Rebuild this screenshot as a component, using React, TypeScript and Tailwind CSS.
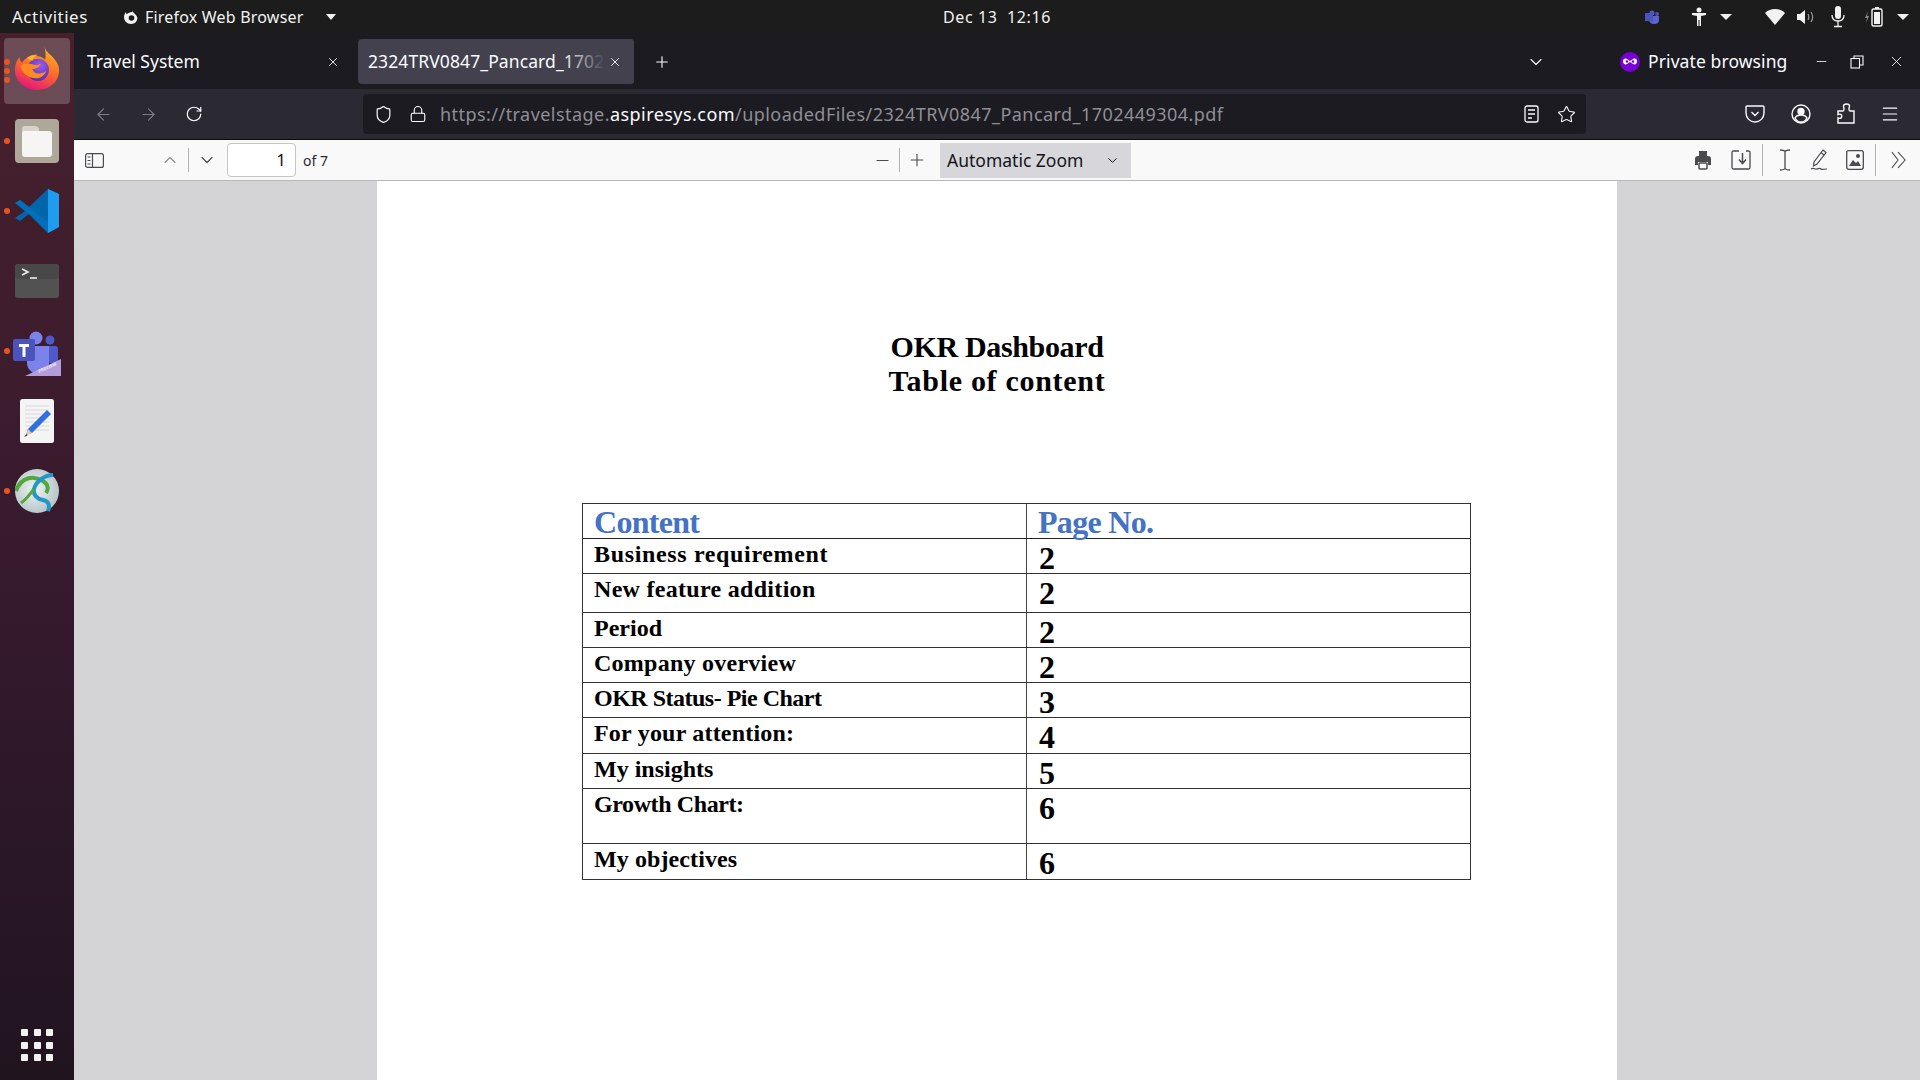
import { ArrowLeft, ArrowRight, ChevronDown, ChevronUp, Lock, Menu, Minus, Plus, RotateCw, Shield, Star, X } from 'lucide-react';

const ui = { fontFamily: '"Noto Sans", sans-serif' };
const doc = { fontFamily: '"Liberation Serif", serif' };

const rows = [
    { label: 'Business requirement', page: '2', h: 'h-[35px]', track: 'tracking-[0.65px]' },
    { label: 'New feature addition', page: '2', h: 'h-[39px]', track: 'tracking-[0.3px]' },
    { label: 'Period', page: '2', h: 'h-[35px]', track: 'tracking-[0px]' },
    { label: 'Company overview', page: '2', h: 'h-[35px]', track: 'tracking-[0.25px]' },
    { label: 'OKR Status- Pie Chart', page: '3', h: 'h-[35px]', track: 'tracking-[-0.5px]' },
    { label: 'For your attention:', page: '4', h: 'h-[36px]', track: 'tracking-[0.2px]' },
    { label: 'My insights', page: '5', h: 'h-[35px]', track: 'tracking-[0px]' },
    { label: 'Growth Chart:', page: '6', h: 'h-[55px]', track: 'tracking-[-0.4px]' },
    { label: 'My objectives', page: '6', h: 'h-[35px]', track: 'tracking-[0.1px]' },
];

function FirefoxLogo() {
    return (
        <svg className="mt-[-6px]" width="46" height="48" viewBox="0 0 50 50">
            <defs>
                <linearGradient id="ffBody" x1="0.7" y1="0" x2="0.3" y2="1">
                    <stop offset="0" stopColor="#ffb627" />
                    <stop offset="0.5" stopColor="#ff6a2b" />
                    <stop offset="1" stopColor="#e3127c" />
                </linearGradient>
                <radialGradient id="ffGlobe" cx="0.6" cy="0.3" r="0.8">
                    <stop offset="0" stopColor="#9a5cf0" />
                    <stop offset="1" stopColor="#4a2a9c" />
                </radialGradient>
            </defs>
            <path d="M33 1c1 5 4 7 8 11 5 5 8 10 8 15 0 13-10 22-24 22C11 49 1 39 1 27 1 21 3 17 6 13c0 3 1 5 3 6 3-5 8-7 14-7 4 0 8 1 11 4 1-5 0-10-1-15z" fill="url(#ffBody)" />
            <circle cx="26" cy="27" r="12" fill="url(#ffGlobe)" />
            <path d="M7 23c4-4 9-3 13-2 3 1 6 1 9-1-1 4-5 6-9 6 1 3 3 5 7 5 3 0 6-1 8-3-2 6-7 9-13 8-8-1-14-7-15-13z" fill="#ff8a1f" />
            <path d="M14 14c4-3 8-4 12-3-3 1-5 3-6 6-3-1-5-2-6-3z" fill="#ffb627" />
        </svg>
    );
}

function FilesIcon() {
    return (
        <svg width="44" height="44" viewBox="0 0 44 44">
            <rect width="44" height="44" rx="4" fill="#aea89a" />
            <path d="M7 10c0-2 1-3 3-3h10c2 0 3 1 4 3v6H7z" fill="#d8d4cc" />
            <path d="M7 15c0-2 1-3 3-3h24c2 0 3 1 3 3v20c0 2-1 3-3 3H10c-2 0-3-1-3-3z" fill="#f6f5f4" />
        </svg>
    );
}

function VsCodeIcon() {
    return (
        <svg width="44" height="44" viewBox="0 0 44 44">
            <path d="M33 0l11 5v33l-11 6-19-19-9 7-5-3 10-7L0 14l5-3 9 7z" fill="#0065a9" />
            <path d="M33 0l11 5v33l-11 6z" fill="#1f9cf0" />
            <path d="M5 11L33 33v11L14 25 0 14z" fill="#007acc" opacity="0.55" />
        </svg>
    );
}

function TerminalIcon() {
    return (
        <svg width="44" height="34" viewBox="0 0 44 34">
            <rect width="44" height="34" rx="3" fill="#525252" />
            <rect width="44" height="15" rx="3" fill="#484848" />
            <path d="M7 5l6 3-6 3" fill="none" stroke="#eee" strokeWidth="1.6" />
            <path d="M15 14h7" stroke="#eee" strokeWidth="1.6" />
        </svg>
    );
}

function TeamsIcon() {
    return (
        <svg className="mt-[5px]" width="48" height="46" viewBox="0 0 48 46">
            <circle cx="23" cy="7" r="6.5" fill="#7b83eb" />
            <circle cx="37" cy="9" r="4.5" fill="#5059c9" />
            <path d="M31 15h11c2 0 3 1 3 3v14H31z" fill="#5059c9" />
            <path d="M14 15h22v18c0 6-4 10-10 10-7 0-12-5-12-11z" fill="#7b83eb" />
            <rect y="8" width="22" height="22" rx="2" fill="#4b53bc" />
            <path d="M6 13h10v3h-3.500v10h-3V16H6z" fill="#fff" />
            <path d="M12 45l36-17v17z" fill="#b39ddb" />
            <text x="26" y="42" fontSize="4.500" fontWeight="700" fill="#f1ecfa" transform="rotate(-24 26 42)" style={ui}>PREVIEW</text>
        </svg>
    );
}

function EditorIcon() {
    return (
        <svg width="34" height="44" viewBox="0 0 34 44">
            <rect width="34" height="44" rx="2.500" fill="#f4f4f4" />
            <path d="M5 7h24M5 11h24M5 15h24M5 19h24M5 23h24M5 27h24M5 31h24" stroke="#d8d8d8" />
            <path d="M27 11l4 4-19 19-6 2 2-6z" fill="#2f6fde" />
            <path d="M6 36l2-6 4 4z" fill="#e8c9a0" />
            <path d="M4 38l2.500-3 1 1.500z" fill="#333" />
        </svg>
    );
}

function VpnIcon() {
    return (
        <svg width="44" height="44" viewBox="0 0 44 44">
            <defs>
                <radialGradient id="vpnGlobe" cx="0.45" cy="0.45" r="0.6">
                    <stop offset="0" stopColor="#eef3f4" />
                    <stop offset="1" stopColor="#b4c2c6" />
                </radialGradient>
            </defs>
            <circle cx="22" cy="22" r="22" fill="url(#vpnGlobe)" />
            <path d="M1 22C6 8 18 6 28 12c5 3 6 8 3 12" fill="none" stroke="#52a83a" strokeWidth="4" />
            <path d="M38 6c-8 0-17 6-19 14-1 6 3 10 9 11 6 1 7 6 5 11" fill="none" stroke="#2596c8" strokeWidth="4" />
            <path d="M6 34c6-4 8-8 13-14" fill="none" stroke="#52a83a" strokeWidth="3" />
        </svg>
    );
}

function DockItem({ dots = 0, active = false, children }: { dots?: number; active?: boolean; children: React.ReactNode }) {
    return (
        <div className="relative flex h-[70px] items-center justify-center">
            {active && <div className="absolute left-1 top-[2px] h-[66px] w-[66px] rounded bg-white/20" />}
            {dots > 0 && (
                <div className="absolute left-[4px] top-0 flex h-full flex-col justify-center gap-[3px]">
                    {Array.from({ length: dots }).map((_, i) => (
                        <span key={i} className="h-[6px] w-[6px] rounded-full bg-[#e95420]" />
                    ))}
                </div>
            )}
            <div className="relative flex items-center justify-center">{children}</div>
        </div>
    );
}

function TopBar() {
    return (
        <div className="flex h-[33px] shrink-0 items-center bg-[#1c1c1c] text-[16px] text-[#f2f2f2]" style={ui}>
            <span className="ml-[12px] w-[77px] text-[17px] tracking-[0.5px]">Activities</span>
            <svg className="ml-[34px]" width="16" height="16" viewBox="0 0 16 16">
                <path d="M9 1c0 2 1 2 3 4 2 2 3 4 2 6-1 3-4 4-6 4-4 0-7-3-7-7 0-2 1-4 2-5 0 1 0 2 1 2 1-1 3-2 5-2z" fill="#f2f2f2" />
                <circle cx="8.500" cy="9" r="2.800" fill="#1c1c1c" />
            </svg>
            <span className="ml-[6px] w-[174px] whitespace-nowrap tracking-[0.2px]">Firefox Web Browser</span>
            <span className="ml-[7px] h-0 w-0 border-x-[5px] border-t-[6px] border-x-transparent border-t-[#f2f2f2]" />
            <div className="flex flex-1 justify-center pl-[14px]">
                <span className="whitespace-pre tracking-[0.6px]">Dec 13  12:16</span>
            </div>
            <svg width="16" height="16" viewBox="0 0 16 16">
                <circle cx="8" cy="4" r="2.500" fill="#5059c9" />
                <circle cx="13" cy="5" r="2" fill="#4a52b5" />
                <path d="M5 7h10v4c0 3-2 4-5 4-3 0-5-2-5-4z" fill="#5b63d0" />
                <rect x="1" y="4" width="8" height="8" fill="#4b53bc" />
            </svg>
            <svg className="ml-[31px]" width="16" height="20" viewBox="0 0 16 20">
                <circle cx="8" cy="3" r="2.500" fill="#f2f2f2" />
                <path d="M1 6h14v2l-5 1v10H8.500v-6h-1v6H6V9L1 8z" fill="#f2f2f2" />
            </svg>
            <span className="ml-[13px] h-0 w-0 border-x-[6px] border-t-[6px] border-x-transparent border-t-[#f2f2f2]" />
            <svg className="ml-[33px]" width="20" height="16" viewBox="0 0 20 16">
                <path d="M0 4C3 1 6 0 10 0s7 1 10 4L10 16z" fill="#f2f2f2" />
            </svg>
            <svg className="ml-[12px]" width="18" height="16" viewBox="0 0 18 16">
                <path d="M0 5h3l5-4v14l-5-4H0z" fill="#f2f2f2" />
                <path d="M11 5c1 2 1 4 0 6M14 3c2 3 2 7 0 10" fill="none" stroke="#9a9a9a" strokeWidth="1.200" />
            </svg>
            <svg className="ml-[16px]" width="14" height="22" viewBox="0 0 14 22">
                <rect x="4" y="0" width="6" height="13" rx="3" fill="#f2f2f2" />
                <path d="M1 9c0 4 2 6 6 6s6-2 6-6M7 15v5M3 20.500h8" fill="none" stroke="#f2f2f2" strokeWidth="1.300" />
            </svg>
            <svg className="ml-[19px]" width="20" height="20" viewBox="0 0 20 20">
                <path d="M4 4L1 11h2l-1 5 3-7H3z" fill="#888" />
                <rect x="8" y="2" width="10" height="17" rx="1.500" fill="none" stroke="#f2f2f2" strokeWidth="1.400" />
                <rect x="11" y="0" width="4" height="2" fill="#f2f2f2" />
                <rect x="10" y="5" width="6" height="12" fill="#f2f2f2" />
            </svg>
            <span className="ml-[13px] mr-[11px] h-0 w-0 border-x-[6px] border-t-[6px] border-x-transparent border-t-[#f2f2f2]" />
        </div>
    );
}

function Dock() {
    return (
        <div className="flex w-[74px] shrink-0 flex-col bg-gradient-to-b from-[#48202c] via-[#371a2e] to-[#20141f] pt-[3px]">
            <DockItem dots={3} active><FirefoxLogo /></DockItem>
            <DockItem dots={1}><FilesIcon /></DockItem>
            <DockItem dots={1}><VsCodeIcon /></DockItem>
            <DockItem><TerminalIcon /></DockItem>
            <DockItem dots={1}><TeamsIcon /></DockItem>
            <DockItem><EditorIcon /></DockItem>
            <DockItem dots={1}><VpnIcon /></DockItem>
            <div className="mt-auto mb-[19px] ml-[21px] grid w-[32px] grid-cols-3 gap-[5.5px]">
                {Array.from({ length: 9 }).map((_, i) => (
                    <span key={i} className="h-[7px] w-[7px] rounded-[1px] bg-[#f2f2f2]" />
                ))}
            </div>
        </div>
    );
}

function TabBar() {
    return (
        <div className="flex h-[56px] shrink-0 items-center bg-[#1c1b22] pt-[1px] text-[17.5px] text-[#fbfbfe]" style={ui}>
            <div className="ml-[13px] flex w-[258px] items-center">
                <span className="w-[239px]">Travel System</span>
                <X size={14} strokeWidth={1.5} />
            </div>
            <div className="relative ml-[13px] flex h-[45px] w-[276px] items-center overflow-hidden rounded bg-[#42414d] pl-[10px]">
                <span className="whitespace-nowrap tracking-[0.1px]">2324TRV0847_Pancard_1702449304.pdf</span>
                <div className="absolute right-0 top-0 flex h-full w-[72px] items-center justify-end bg-gradient-to-r from-transparent via-[#42414d] via-60% to-[#42414d] pr-[12px]">
                    <X size={14} strokeWidth={1.5} />
                </div>
            </div>
            <Plus className="ml-[19px]" size={18} strokeWidth={1.5} />
            <ChevronDown className="ml-[855px]" size={20} strokeWidth={1.3} />
            <svg className="ml-[74px]" width="20" height="20" viewBox="0 0 20 20">
                <circle cx="10" cy="10" r="10" fill="#7a00d6" />
                <path d="M3 9c0-2 2-3 4-2l3 2 3-2c2-1 4 0 4 2 0 3-2 4-4 3l-3-2-3 2c-2 1-4 0-4-3z" fill="#fff" />
                <circle cx="7" cy="9.500" r="1.300" fill="#7a00d6" />
                <circle cx="13" cy="9.500" r="1.300" fill="#7a00d6" />
            </svg>
            <span className="ml-[8px] w-[139px] whitespace-nowrap tracking-[0.1px]">Private browsing</span>
            <Minus className="ml-[27px]" size={15} strokeWidth={1.3} />
            <svg className="ml-[21px]" width="14" height="14" viewBox="0 0 14 14" fill="none" stroke="#fbfbfe" strokeWidth="1.100">
                <rect x="1" y="3.500" width="8.500" height="9.500" />
                <path d="M4 3.500V1h9v9h-3.500" />
            </svg>
            <X className="ml-[24px]" size={17} strokeWidth={1.2} />
        </div>
    );
}

function NavBar() {
    return (
        <div className="flex h-[51px] shrink-0 items-center border-b border-b-[#0c0c0d] bg-[#2b2a33] pl-[20px] text-[#fbfbfe]" style={ui}>
            <ArrowLeft size={19} strokeWidth={1.4} className="text-[#7d7c85]" />
            <ArrowRight size={19} strokeWidth={1.4} className="ml-[26px] text-[#7d7c85]" />
            <RotateCw size={18} strokeWidth={1.6} className="ml-[27px]" />
            <div className="ml-[160px] flex h-[40px] w-[1223px] items-center rounded bg-[#1c1b22]">
                <Shield size={19} strokeWidth={1.5} className="ml-[11px]" />
                <Lock size={18} strokeWidth={1.5} className="ml-[16px]" />
                <span className="ml-[13px] whitespace-nowrap text-[18px] tracking-[0.45px] text-[#8f8f94]">
                    https://travelstage.<span className="text-[#fbfbfe]">aspiresys.com</span>/uploadedFiles/2324TRV0847_Pancard_1702449304.pdf
                </span>
                <svg className="ml-auto" width="15" height="18" viewBox="0 0 15 18" fill="none" stroke="#fbfbfe" strokeWidth="1.300">
                    <rect x="1" y="1" width="13" height="16" rx="2" />
                    <path d="M4 5h7M4 9h7M4 13h4" />
                </svg>
                <Star size={19} strokeWidth={1.4} className="ml-[18px] mr-[10px]" />
            </div>
            <svg className="ml-[159px]" width="20" height="20" viewBox="0 0 20 20" fill="none" stroke="#fbfbfe" strokeWidth="1.400">
                <path d="M2 2h16c.5 0 1 .5 1 1v6c0 5-4 9-9 9s-9-4-9-9V3c0-.5.5-1 1-1z" />
                <path d="M6.500 8L10 11.500 13.500 8" />
            </svg>
            <svg className="ml-[26px]" width="20" height="20" viewBox="0 0 20 20" fill="none" stroke="#fbfbfe" strokeWidth="1.400">
                <circle cx="10" cy="10" r="9" />
                <circle cx="10" cy="7.500" r="3" fill="#fbfbfe" />
                <path d="M4 14c1-2 3-3 6-3s5 1 6 3c-1 2-3 4-6 4s-5-2-6-4z" />
            </svg>
            <svg className="ml-[26px]" width="18" height="22" viewBox="0 0 18 22" fill="none" stroke="#fbfbfe" strokeWidth="1.400">
                <path d="M1 8h5c1 0 1-1 1-2 0-1-.5-1.500-.5-3 0-1 1-2 3-2s3 1 3 2c0 1.500-.5 2-.5 3s0 2 1 2h4v12H1v-5c1 .5 2 .5 3 0s1-3 0-3.500-2-.5-3 0z" />
            </svg>
            <Menu size={20} strokeWidth={1.4} className="ml-[25px]" />
        </div>
    );
}

function PdfToolbar() {
    return (
        <div className="flex h-[41px] shrink-0 items-center border-b border-b-[#b8b8b8] bg-[#f9f9fa] pl-[11px] text-[#4a4a4f]" style={ui}>
            <svg width="19" height="15" viewBox="0 0 19 15" fill="none" stroke="#4a4a4f" strokeWidth="1.200">
                <rect x="0.600" y="0.600" width="17.800" height="13.800" rx="2" />
                <path d="M7.500 1v13M2.500 4h3M2.500 7.500h3M2.500 11h3" />
            </svg>
            <ChevronUp size={20} strokeWidth={1.3} className="ml-[56px] text-[#8a8a8e]" />
            <div className="ml-[8px] h-[24px] w-px bg-[#b1b1b3]" />
            <ChevronDown size={20} strokeWidth={1.3} className="ml-[8px]" />
            <div className="ml-[10px] flex h-[34px] w-[69px] items-center justify-end rounded border border-[#c4c4c6] bg-white pr-[9px] text-[17px] text-[#15141a]">1</div>
            <span className="ml-[7px] w-[30px] whitespace-nowrap text-[14px] text-[#2b2a33]">of 7</span>
            <Minus size={19} strokeWidth={1.3} className="ml-[540px]" />
            <div className="ml-[7px] h-[24px] w-px bg-[#b1b1b3]" />
            <Plus size={20} strokeWidth={1.3} className="ml-[7px]" />
            <div className="ml-[13px] flex h-[35px] w-[191px] items-center bg-[#d7d7db] pl-[7px] text-[17.5px] text-[#15141a]">
                <span className="w-[158px] whitespace-nowrap">Automatic Zoom</span>
                <ChevronDown size={15} strokeWidth={1.6} />
            </div>
            <svg className="ml-[563px]" width="18" height="20" viewBox="0 0 18 20">
                <path d="M5 1h8v5H5zM1 9c0-2 1-3 3-3h10c2 0 3 1 3 3v6h-3v-3H4v3H1z" fill="#4a4a4f" />
                <rect x="5" y="13" width="8" height="6" rx="1" fill="none" stroke="#4a4a4f" strokeWidth="1.500" />
            </svg>
            <svg className="ml-[19px]" width="20" height="20" viewBox="0 0 20 20" fill="none" stroke="#4a4a4f" strokeWidth="1.300">
                <path d="M8 1H2.500C1.500 1 1 1.500 1 2.500v15c0 1 .5 1.500 1.500 1.500h15c1 0 1.500-.5 1.500-1.500v-15c0-1-.5-1.500-1.500-1.500H15" />
                <path d="M11.500 3v9M8 9.500l3.500 4 3.500-4" strokeWidth="1.500" />
            </svg>
            <div className="ml-[11px] h-[32px] w-px bg-[#b1b1b3]" />
            <svg className="ml-[16px]" width="12" height="22" viewBox="0 0 12 22" fill="none" stroke="#4a4a4f" strokeWidth="1.300">
                <path d="M1 1c3 0 4 0 5 1.500C7 1 8 1 11 1M6 2.500v17M1 21c3 0 4 0 5-1.500 1 1.500 2 1.500 5 1.500" />
            </svg>
            <svg className="ml-[19px]" width="18" height="22" viewBox="0 0 18 22" fill="none" stroke="#4a4a4f" strokeWidth="1.200">
                <path d="M13 1l3 2.500L7 15l-3.500 2 .5-4zM11 3.500l3 2.500" />
                <path d="M1 20c3-2 4 1 6 0s3-1 4 0 3 0 6 0" />
            </svg>
            <svg className="ml-[18px]" width="18" height="20" viewBox="0 0 18 20">
                <rect x="0.700" y="0.700" width="16.600" height="18.600" rx="2" fill="none" stroke="#4a4a4f" strokeWidth="1.300" />
                <path d="M3 16l4-6 3 3 2-2 3 5z" fill="#4a4a4f" />
                <circle cx="12" cy="6" r="2" fill="#4a4a4f" />
            </svg>
            <div className="ml-[11px] h-[32px] w-px bg-[#b1b1b3]" />
            <svg className="ml-[15px]" width="15" height="18" viewBox="0 0 17 20" fill="none" stroke="#4a4a4f" strokeWidth="1.200">
                <path d="M1 1l7 9-7 9M8 1l8 9-8 9" />
            </svg>
        </div>
    );
}

function PdfPage() {
    return (
        <div className="ml-[303px] flex h-full w-[1240px] flex-col bg-white pt-[149px] text-black" style={doc}>
            <div className="text-center text-[30px] font-bold leading-[34px]">
                <div className="tracking-[-0.35px]">OKR Dashboard</div>
                <div className="tracking-[0.7px]">Table of content</div>
            </div>
            <div className="ml-[205px] mt-[105px] w-[889px] border-[1.5px] border-[#333]">
                <div className="flex h-[35px] border-b-[1.5px] border-[#222] text-[32px] font-bold leading-[37px] tracking-[-0.7px] text-[#4472c4]">
                    <div className="w-[444px] border-r-[1.5px] border-[#444] pl-[11px]">Content</div>
                    <div className="pl-[11px]">Page No.</div>
                </div>
                {rows.map((row, index) => (
                    <div key={index} className={`flex ${row.h} ${index < rows.length - 1 ? 'border-b-[1.5px] border-[#333]' : ''}`}>
                        <div className={`w-[444px] border-r-[1.5px] border-[#444] pl-[11px] pt-[1px] text-[24px] font-bold leading-[29px] ${row.track}`}>{row.label}</div>
                        <div className="pl-[12px] pt-[3px] text-[32px] font-bold leading-[33px]">{row.page}</div>
                    </div>
                ))}
            </div>
        </div>
    );
}

export default function App() {
    return (
        <div className="flex h-[1080px] w-[1920px] flex-col overflow-hidden">
            <TopBar />
            <div className="flex min-h-0 flex-1">
                <Dock />
                <div className="flex min-w-0 flex-1 flex-col">
                    <TabBar />
                    <NavBar />
                    <PdfToolbar />
                    <div className="min-h-0 flex-1 bg-[#d4d4d7]">
                        <PdfPage />
                    </div>
                </div>
            </div>
        </div>
    );
}
